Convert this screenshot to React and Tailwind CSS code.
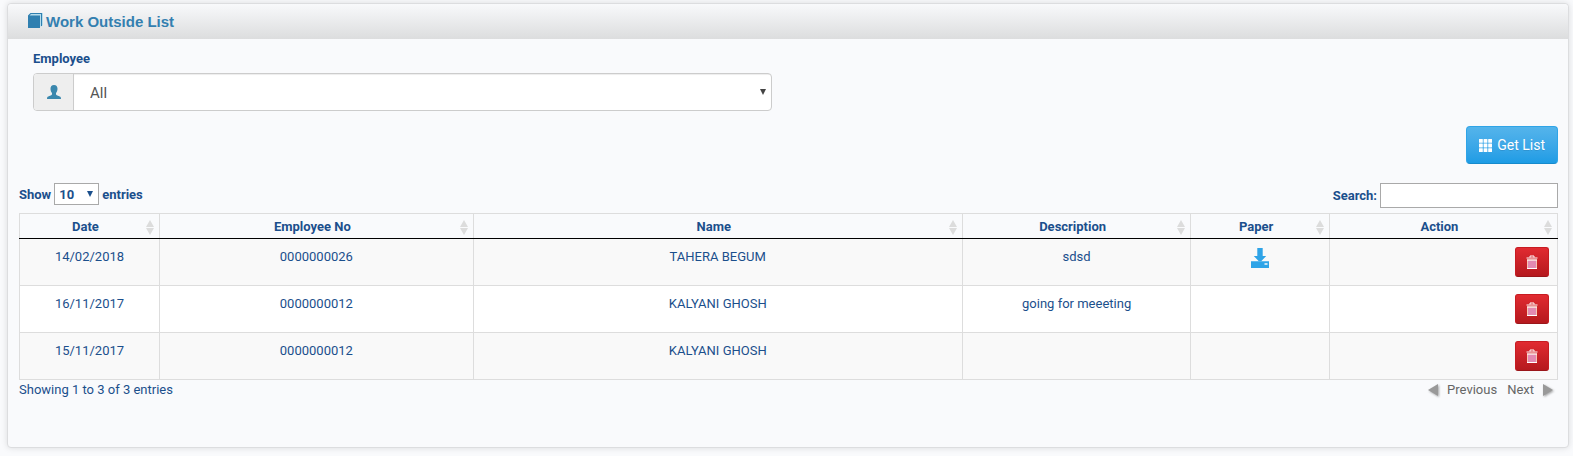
import React from "react";

const columns = [
  { label: "Date", width: "9.1%" },
  { label: "Employee No", width: "20.4%" },
  { label: "Name", width: "31.8%" },
  { label: "Description", width: "14.87%" },
  { label: "Paper", width: "9%" },
  { label: "Action", width: "14.83%" },
];

const rows = [
  { date: "14/02/2018", no: "0000000026", name: "TAHERA BEGUM", description: "sdsd", paper: true },
  { date: "16/11/2017", no: "0000000012", name: "KALYANI GHOSH", description: "going for meeeting", paper: false },
  { date: "15/11/2017", no: "0000000012", name: "KALYANI GHOSH", description: "", paper: false },
];

function BookIcon() {
  return (
    <svg className="mt-[9px] h-[15px] w-[15px] self-start" viewBox="0 0 15 15" aria-hidden="true">
      <path d="M0 2.500 2.500 0H15v12l-1.500 1.500H12V15H0z" fill="#b5dcec" />
      <path d="M0 2.500 2.500 0H14v13h-1V1H3L1.500 2.500H12V15H0z" fill="#2f7fb0" />
    </svg>
  );
}

function UserIcon() {
  return (
    <svg className="h-[14px] w-[14px]" viewBox="0 0 14 14" fill="#3a87ad" aria-hidden="true">
      <path d="M7 0c2.400 0 3.500 1.500 3.500 3.700 0 1.800-.7 3.400-1.500 4.300v1.200c0 .5.3.8.8 1l3 1.400c.8.4 1.200 1 1.200 2.400H0c0-1.400.4-2 1.200-2.400l3-1.400c.5-.2.8-.5.8-1V8C4.200 7.100 3.500 5.500 3.500 3.700 3.500 1.500 4.600 0 7 0z" />
    </svg>
  );
}

function GridIcon() {
  return (
    <svg className="h-[13px] w-[13px]" viewBox="0 0 13 13" fill="currentColor" aria-hidden="true">
      {[0, 4.6, 9.2].map((y) =>
        [0, 4.6, 9.2].map((x) => <rect key={`${x}-${y}`} x={x} y={y} width="3.8" height="3.8" rx="0.3" />)
      )}
    </svg>
  );
}

function DownloadIcon() {
  return (
    <svg className="h-5 w-[18px]" viewBox="0 0 18 20" fill="#2fa4e7" aria-hidden="true">
      <path d="M6.300 0h5.400v8h3.500L10.200 13.200H7.800L2.800 8h3.500z" />
      <path fillRule="evenodd" d="M0 13.300h18V20H0zM13.500 15.200v1.600h3v-1.600z" />
    </svg>
  );
}

function TrashIcon() {
  return (
    <svg className="h-[14px] w-3" viewBox="0 0 12 14" aria-hidden="true">
      <path d="M4 2.500V1h4v1.500" fill="none" stroke="#fff" strokeWidth="1" />
      <path d="M.5 2.500h11v1H.5z" fill="#fff" />
      <path d="M1 4.500h10V14H1z" fill="#f6c6b4" />
      <path d="M3 5.500V13M5 5.500V13M7 5.500V13M9 5.500V13" stroke="#cf4fb0" strokeWidth="1" />
      <path d="M1 5h10M1 13.500h10" stroke="#fff" strokeWidth="1" />
    </svg>
  );
}

function SortIcon() {
  return (
    <svg className="absolute right-[5px] top-[6px] h-[15px] w-[8px]" viewBox="0 0 8 15" fill="#dcdcdc" aria-hidden="true">
      <path d="M4 0 8 7H0zM0 8h8l-4 7z" />
    </svg>
  );
}

function PageArrow({ next }) {
  return (
    <svg
      className="h-[14px] w-[12px] drop-shadow-[1px_1px_1px_rgba(0,0,0,0.35)]"
      viewBox="0 0 12 14"
      fill="#999"
      aria-hidden="true"
    >
      <path d={next ? "M1 1v12l10-6z" : "M11 1v12L1 7z"} />
    </svg>
  );
}

function Caret({ className }) {
  return (
    <svg className={className} viewBox="0 0 6 6" fill="currentColor" aria-hidden="true">
      <path d="M0 0h6L3 6z" />
    </svg>
  );
}

export default function App() {
  return (
    <div className="min-h-screen bg-[#f9fafc] pt-[3px] pr-1 pb-2 pl-[7px] font-[Roboto,sans-serif] text-[13px] leading-[18px] text-[#1b4f8c]">
      <main className="rounded border border-[#dcdddf] bg-[#f9fafc] pb-[48px] shadow-[0_0_6px_rgba(0,0,0,0.12)]">
        <header className="flex h-[35px] items-center gap-[3px] rounded-t bg-linear-to-b from-[#f8f9fb] to-[#dcddde] px-5">
          <BookIcon />
          <h1 className="font-['Liberation_Sans',sans-serif] text-[15px] font-bold text-[#337fb0]">Work Outside List</h1>
        </header>

        <div className="pr-[10px] pl-[11px]">
          <div className="w-1/2 pt-[11px] pr-[17px] pl-[14px]">
            <label htmlFor="employee" className="block font-bold">
              Employee
            </label>
            <div className="mt-[5px] flex h-[38px] overflow-hidden rounded border border-[#ccc] bg-white">
              <span className="flex w-10 shrink-0 items-center justify-center border-r border-[#ccc] bg-[#eee]">
                <UserIcon />
              </span>
              <div className="relative flex-1 shadow-[inset_0_1px_1px_rgba(0,0,0,0.075)]">
                <select
                  id="employee"
                  className="h-full w-full appearance-none bg-transparent px-4 pt-[2px] text-[15px] text-[#555] outline-none"
                >
                  <option>All</option>
                </select>
                <Caret className="pointer-events-none absolute top-[15px] right-[5px] h-[6px] w-[6px] text-[#444]" />
              </div>
            </div>
          </div>

          <div className="mt-[15px] flex justify-end">
            <button
              type="button"
              className="flex h-[38px] items-center gap-[5px] rounded border border-[#2fa4e7] border-b-[#178acc] bg-linear-to-b from-[#54b4eb] to-[#1d9ce5] px-3 text-[14px] text-white [text-shadow:0_1px_0_rgba(0,0,0,0.1)]"
            >
              <GridIcon />
              Get List
            </button>
          </div>

          <div className="mt-[19px] flex items-start justify-between font-bold">
            <label className="flex items-start gap-[3px] leading-6">
              Show
              <span className="relative">
                <select className="block h-[22px] w-[45px] appearance-none border border-[#a9a9a9] bg-white pt-[2px] pl-1 leading-[18px] outline-none">
                  <option>10</option>
                  <option>25</option>
                  <option>50</option>
                  <option>100</option>
                </select>
                <Caret className="pointer-events-none absolute top-[8px] right-[6px] h-[6px] w-[6px]" />
              </span>
              entries
            </label>
            <label className="flex items-center gap-[3px]">
              Search:
              <input type="search" className="h-[25px] w-[178px] border border-[#a9a9a9] bg-white px-1 font-normal outline-none" />
            </label>
          </div>

          <table className="mt-[5px] w-full table-fixed border-collapse text-center">
            <colgroup>
              {columns.map((c) => (
                <col key={c.label} style={{ width: c.width }} />
              ))}
            </colgroup>
            <thead>
              <tr className="h-[25px]">
                {columns.map((c) => (
                  <th key={c.label} className="relative border border-[#ddd] border-b-black pt-[2px] pr-2 pb-0 pl-0 font-bold">
                    {c.label}
                    <SortIcon />
                  </th>
                ))}
              </tr>
            </thead>
            <tbody>
              {rows.map((r) => (
                <tr key={r.date} className="h-[47px] align-top odd:bg-[#f9f9f9] even:bg-white">
                  <td className="border border-[#ddd] pt-[9px]">{r.date}</td>
                  <td className="border border-[#ddd] pt-[9px]">{r.no}</td>
                  <td className="border border-[#ddd] pt-[9px]">{r.name}</td>
                  <td className="border border-[#ddd] pt-[9px]">{r.description}</td>
                  <td className="border border-[#ddd] pt-[9px]">
                    {r.paper && (
                      <a href="#paper" aria-label="Download paper" className="inline-block align-top">
                        <DownloadIcon />
                      </a>
                    )}
                  </td>
                  <td className="border border-[#ddd] px-2 pt-2">
                    <button
                      type="button"
                      aria-label="Delete"
                      className="ml-auto flex h-[30px] w-[34px] items-center justify-center rounded-[3px] border border-[#c71c22] border-b-[#9a161a] bg-linear-to-b from-[#e12b31] to-[#b5191e]"
                    >
                      <TrashIcon />
                    </button>
                  </td>
                </tr>
              ))}
            </tbody>
          </table>

          <div className="flex items-center justify-between pt-[1px]">
            <p>Showing 1 to 3 of 3 entries</p>
            <nav className="flex gap-[10px] pr-1 text-[#666]" aria-label="Pagination">
              <button type="button" className="flex items-center gap-2">
                <PageArrow />
                Previous
              </button>
              <button type="button" className="flex items-center gap-2">
                Next
                <PageArrow next />
              </button>
            </nav>
          </div>
        </div>
      </main>
    </div>
  );
}
